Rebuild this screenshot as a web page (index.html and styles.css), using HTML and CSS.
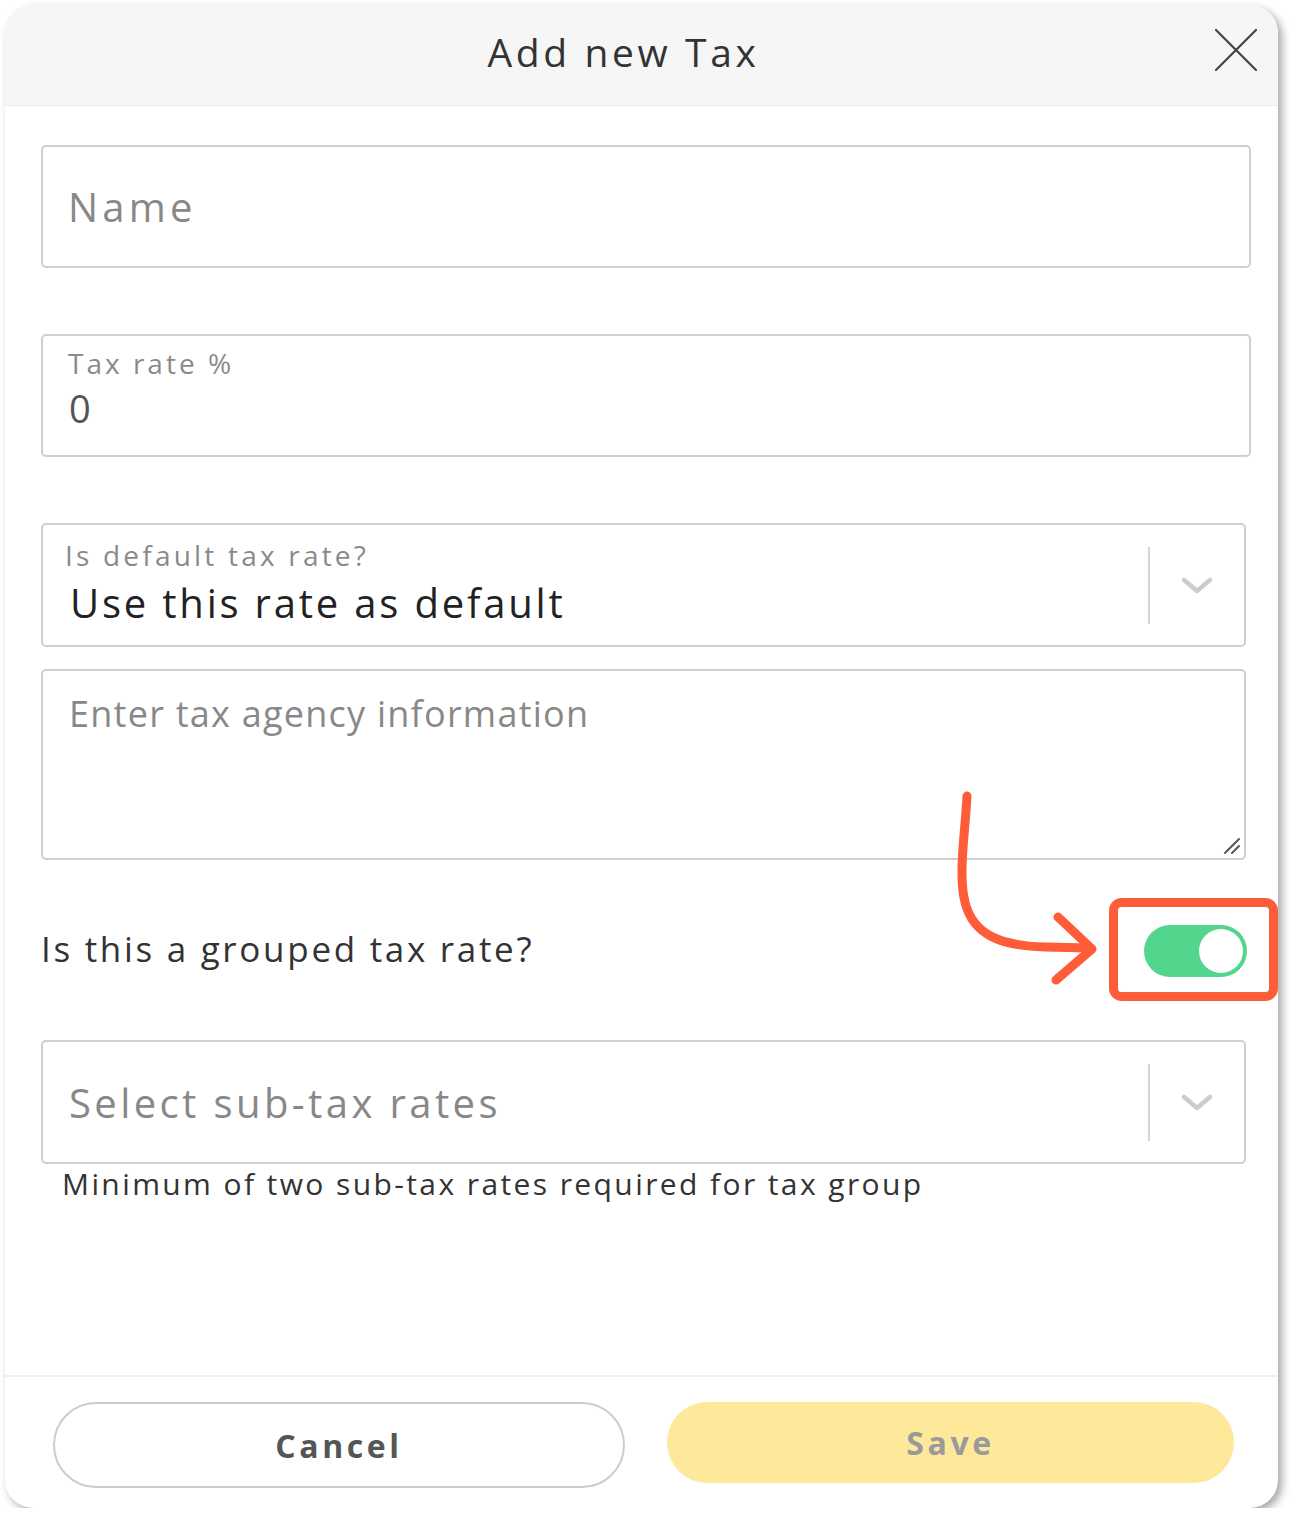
FILE: index.html
```html
<!DOCTYPE html>
<html lang="en">
<head>
    <meta charset="UTF-8">
    <meta name="viewport" content="width=device-width, initial-scale=1.0">
    <title>Add new Tax</title>
    <link rel="stylesheet" href="styles.css">
</head>
<body>
    <div class="modal">
        <div class="modal-header">
            <h1 class="modal-title">Add new Tax</h1>
            <button class="close-btn" aria-label="Close">
                <svg width="42" height="42" viewBox="0 0 42 42" fill="none" stroke="#444" stroke-width="2.2" stroke-linecap="round"><path d="M1 1L41 41M41 1L1 41"/></svg>
            </button>
        </div>

        <form class="modal-body">
            <div class="field field-wide">
                <span class="placeholder name">Name</span>
            </div>

            <div class="field field-wide field-labeled gap-top">
                <span class="label">Tax rate %</span>
                <span class="value">0</span>
            </div>

            <div class="field select gap-top">
                <div class="select-main">
                    <span class="label tight">Is default tax rate?</span>
                    <span class="value dark">Use this rate as default</span>
                </div>
                <div class="select-sep"></div>
                <div class="select-arrow">
                    <svg width="32" height="18" viewBox="0 0 32 18" fill="none" stroke="#cccccc" stroke-width="4.5" stroke-linecap="round" stroke-linejoin="round"><path d="M3 3L16 14L29 3"/></svg>
                </div>
            </div>

            <div class="field textarea">
                <span class="placeholder">Enter tax agency information</span>
                <svg class="resize" width="20" height="20" viewBox="0 0 20 20" stroke="#555" stroke-width="2" stroke-linecap="round"><path d="M3 17L17 3M10 17L17 10"/></svg>
            </div>

            <div class="toggle-row">
                <span>Is this a grouped tax rate?</span>
                <div class="toggle"><div class="knob"></div></div>
            </div>

            <div class="field select">
                <div class="select-main">
                    <span class="placeholder big">Select sub-tax rates</span>
                </div>
                <div class="select-sep"></div>
                <div class="select-arrow">
                    <svg width="32" height="18" viewBox="0 0 32 18" fill="none" stroke="#cccccc" stroke-width="4.5" stroke-linecap="round" stroke-linejoin="round"><path d="M3 3L16 14L29 3"/></svg>
                </div>
            </div>
            <p class="helper">Minimum of two sub-tax rates required for tax group</p>
        </form>

        <div class="modal-footer">
            <button class="btn btn-cancel">Cancel</button>
            <button class="btn btn-save">Save</button>
        </div>

        <!-- annotation -->
        <svg class="annotation" width="1292" height="1523" viewBox="0 0 1292 1523" fill="none" stroke="#ff5c39" stroke-linecap="round" stroke-linejoin="round">
            <path d="M967 796C965 835 958 875 965 902C973 936 1003 946 1045 947L1089 948" stroke-width="9"/>
            <path d="M1058 917L1092 949L1056 980" stroke-width="9"/>
            <rect x="1113.5" y="902.5" width="160" height="94" rx="8" stroke-width="9"/>
        </svg>
    </div>
</body>
</html>
```

FILE: styles.css
```css
*{
    box-sizing: border-box;
}
body{
    margin: 0;
    background-color: #ffffff;
    font-family: "Open Sans", "DejaVu Sans", sans-serif;
    color: #333;
}
.modal{
    position: relative;
    margin: 5px 0 0 5px;
    width: 1273px;
    height: 1503px;
    background-color: #fff;
    border-radius: 28px;
    box-shadow: 4px 4px 8px rgba(0, 0, 0, 0.35);
    display: flex;
    flex-direction: column;
    overflow: hidden;
}
.modal-header{
    position: relative;
    height: 101px;
    background-color: #f6f6f6;
    border-bottom: 1px solid #ebebeb;
    display: flex;
    align-items: center;
    justify-content: center;
    padding: 0 36px 8px 0;
}
.modal-title{
    margin: 0;
    font-size: 39px;
    font-weight: 400;
    letter-spacing: 3.6px;
    color: #333;
}
.close-btn{
    position: absolute;
    right: 21px;
    top: 24px;
    background: none;
    border: none;
    padding: 0;
}
.modal-body{
    flex: 1;
    padding: 39px 0 0 36px;
    display: flex;
    flex-direction: column;
}
.field{
    width: 1205px;
    border: 2px solid #cfcfcf;
    border-radius: 5px;
    background: #fff;
}
.field-wide{
    width: 1210px;
    height: 123px;
    display: flex;
    align-items: center;
    padding-left: 25px;
}
.gap-top{
    margin-top: 66px;
}
.field-labeled{
    flex-direction: column;
    align-items: flex-start;
    justify-content: flex-start;
    padding-top: 7px;
}
.label{
    font-size: 28px;
    color: #8a8a8a;
    letter-spacing: 3px;
    line-height: 40px;
}
.label.tight{
    margin-left: -4px;
    letter-spacing: 3.2px;
    margin-top: -5px;
}
.value{
    font-size: 38px;
    color: #555;
    line-height: 50px;
    padding-left: 1px;
}
.value.dark{
    color: #222;
    font-size: 40px;
    letter-spacing: 2.8px;
    line-height: 56px;
}
.placeholder{
    font-size: 36px;
    color: #888;
    letter-spacing: 1.25px;
}
.placeholder.name{
    font-size: 40px;
    letter-spacing: 4.2px;
}
.placeholder.big{
    font-size: 40px;
    letter-spacing: 3.4px;
}
.select{
    height: 124px;
    display: flex;
    align-items: center;
}
.select-main{
    flex: 1;
    display: flex;
    flex-direction: column;
    padding-left: 26px;
}
.select-sep{
    width: 2px;
    height: 77px;
    background-color: #d6d6d6;
}
.select-arrow{
    width: 94px;
    display: flex;
    justify-content: center;
    padding-top: 2px;
}
.textarea{
    position: relative;
    margin-top: 22px;
    height: 191px;
    padding: 18px 0 0 26px;
}
.resize{
    position: absolute;
    right: 2px;
    bottom: 2px;
}
.toggle-row{
    width: 1206px;
    height: 180px;
    display: flex;
    align-items: center;
    justify-content: space-between;
    font-size: 35px;
    letter-spacing: 2.7px;
    color: #333;
    padding-bottom: 4px;
}
.toggle{
    width: 103px;
    height: 52px;
    border-radius: 26px;
    background-color: #52d68e;
    display: flex;
    align-items: center;
    justify-content: flex-end;
    padding-right: 4px;
    margin-top: 6px;
}
.knob{
    width: 44px;
    height: 44px;
    border-radius: 50%;
    background-color: #fff;
}
.helper{
    margin: -1px 0 0 21px;
    font-size: 30px;
    letter-spacing: 2.4px;
    color: #333;
}
.modal-footer{
    height: 133px;
    border-top: 2px solid #efefef;
    display: flex;
    align-items: flex-start;
    padding: 25px 0 0 48px;
    gap: 42px;
}
.btn{
    font-family: inherit;
    font-size: 32px;
    font-weight: 700;
    letter-spacing: 3.6px;
    border-radius: 44px;
    cursor: pointer;
}
.btn-cancel{
    width: 572px;
    height: 86px;
    background: #fff;
    border: 2px solid #cccccc;
    color: #555;
}
.btn-save{
    width: 567px;
    height: 81px;
    background: #fee89a;
    border: none;
    color: #9a9a9a;
}
.annotation{
    position: absolute;
    left: -5px;
    top: -5px;
    pointer-events: none;
}
```
